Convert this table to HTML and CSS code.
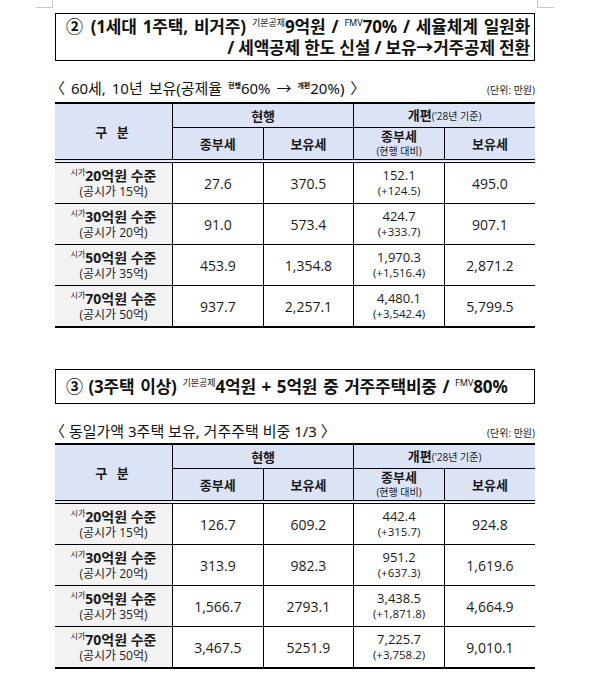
FILE: index.html
```html
<!DOCTYPE html>
<html>
<head>
  <meta charset="utf-8">
  <title>종부세 개편안 비교</title>
  <link rel="stylesheet" href="styles.css">
</head>
<body>
  <span class="crop-mark crop-left"></span>
  <span class="crop-mark crop-right"></span>

  <div class="page">
    <!-- case 2 -->
    <div class="title-box title-first">
      <span class="line-full">② (1세대 1주택, 비거주) <sup class="tag">기본공제</sup>9억원 / <sup class="tag">FMV</sup>70% / 세율체계 일원화</span>
      <span class="line-end">/ 세액공제 한도 신설 / 보유→거주공제 전환</span>
    </div>

    <div class="caption">
      <span class="caption-main spaced">〈 60세, 10년 보유(공제율 <sup class="mini">현행</sup>60% → <sup class="mini">개편</sup>20%) 〉</span>
      <span class="unit">(단위: 만원)</span>
    </div>

    <table class="tax-table">
      <thead>
        <tr class="head-top">
          <th rowspan="2" class="col-label">구 분</th>
          <th colspan="2">현행</th>
          <th colspan="2">개편<small>('28년 기준)</small></th>
        </tr>
        <tr class="head-sub">
          <th>종부세</th>
          <th>보유세</th>
          <th>종부세<span class="sub-note">(현행 대비)</span></th>
          <th>보유세</th>
        </tr>
      </thead>
      <tbody>
        <tr>
          <td class="row-label"><b><sup>시가</sup>20억원 수준</b><span>(공시가 15억)</span></td>
          <td>27.6</td><td>370.5</td>
          <td class="diff">152.1<span>(+124.5)</span></td>
          <td>495.0</td>
        </tr>
        <tr>
          <td class="row-label"><b><sup>시가</sup>30억원 수준</b><span>(공시가 20억)</span></td>
          <td>91.0</td><td>573.4</td>
          <td class="diff">424.7<span>(+333.7)</span></td>
          <td>907.1</td>
        </tr>
        <tr>
          <td class="row-label"><b><sup>시가</sup>50억원 수준</b><span>(공시가 35억)</span></td>
          <td>453.9</td><td>1,354.8</td>
          <td class="diff">1,970.3<span>(+1,516.4)</span></td>
          <td>2,871.2</td>
        </tr>
        <tr>
          <td class="row-label"><b><sup>시가</sup>70억원 수준</b><span>(공시가 50억)</span></td>
          <td>937.7</td><td>2,257.1</td>
          <td class="diff">4,480.1<span>(+3,542.4)</span></td>
          <td>5,799.5</td>
        </tr>
      </tbody>
    </table>

    <!-- case 3 -->
    <div class="title-box title-second">
      ③ (3주택 이상) <sup class="tag">기본공제</sup>4억원 + 5억원 중 거주주택비중 / <sup class="tag">FMV</sup>80%
    </div>

    <div class="caption caption-tight">
      <span class="caption-main">〈 동일가액 3주택 보유, 거주주택 비중 1/3 〉</span>
      <span class="unit">(단위: 만원)</span>
    </div>

    <table class="tax-table">
      <thead>
        <tr class="head-top">
          <th rowspan="2" class="col-label">구 분</th>
          <th colspan="2">현행</th>
          <th colspan="2">개편<small>('28년 기준)</small></th>
        </tr>
        <tr class="head-sub">
          <th>종부세</th>
          <th>보유세</th>
          <th>종부세<span class="sub-note">(현행 대비)</span></th>
          <th>보유세</th>
        </tr>
      </thead>
      <tbody>
        <tr>
          <td class="row-label"><b><sup>시가</sup>20억원 수준</b><span>(공시가 15억)</span></td>
          <td>126.7</td><td>609.2</td>
          <td class="diff">442.4<span>(+315.7)</span></td>
          <td>924.8</td>
        </tr>
        <tr>
          <td class="row-label"><b><sup>시가</sup>30억원 수준</b><span>(공시가 20억)</span></td>
          <td>313.9</td><td>982.3</td>
          <td class="diff">951.2<span>(+637.3)</span></td>
          <td>1,619.6</td>
        </tr>
        <tr>
          <td class="row-label"><b><sup>시가</sup>50억원 수준</b><span>(공시가 35억)</span></td>
          <td>1,566.7</td><td>2793.1</td>
          <td class="diff">3,438.5<span>(+1,871.8)</span></td>
          <td>4,664.9</td>
        </tr>
        <tr>
          <td class="row-label"><b><sup>시가</sup>70억원 수준</b><span>(공시가 50억)</span></td>
          <td>3,467.5</td><td>5251.9</td>
          <td class="diff">7,225.7<span>(+3,758.2)</span></td>
          <td>9,010.1</td>
        </tr>
      </tbody>
    </table>
  </div>
</body>
</html>
```

FILE: styles.css
```css
body {
  margin: 0;
  position: relative;
  background: #ffffff;
  color: #111111;
  font-family: "Open Sans", "Noto Sans CJK KR", sans-serif;
}

/* page corner marks */
.crop-mark {
  position: absolute;
  top: 0;
  width: 16px;
  height: 7px;
  border-bottom: 1px solid #c8c8c8;
}
.crop-left {
  left: 36px;
  border-right: 1px solid #c8c8c8;
}
.crop-right {
  left: 537px;
  border-left: 1px solid #c8c8c8;
}

.page {
  width: 480px;
  margin-left: 55px;
  padding-top: 13px;
}

.title-box {
  border: 1px solid #000000;
  font-family: "Noto Sans", "Noto Sans CJK KR", sans-serif;
  font-weight: bold;
  font-size: 17px;
  line-height: 21px;
  letter-spacing: -0.2px;
}
.title-first {
  padding: 2px 4px 2px 10px;
}
.title-first .line-full {
  display: block;
  text-align: justify;
  text-align-last: justify;
}
.title-first .line-end {
  display: block;
  text-align: right;
}
.title-second {
  margin-top: 41px;
  padding: 6px 4px 6px 10px;
  white-space: nowrap;
  word-spacing: 1.5px;
}
.title-box .tag {
  font-size: 9px;
  font-weight: normal;
  vertical-align: 7px;
  line-height: 0;
  letter-spacing: 0;
  word-spacing: 0;
}

.caption {
  display: flex;
  justify-content: space-between;
  align-items: flex-end;
  margin-top: 17px;
  margin-bottom: 4px;
}
.caption-tight {
  margin-bottom: 2px;
}
.caption-main {
  font-family: "Noto Sans", "Noto Sans CJK KR", sans-serif;
  font-size: 15px;
  line-height: 20px;
  margin-left: -5px;
}
.caption-main.spaced {
  word-spacing: 2px;
}
.caption-main .mini {
  font-size: 7px;
  font-weight: bold;
  vertical-align: 6px;
  line-height: 0;
  word-spacing: 0;
}
.unit {
  font-size: 10px;
  line-height: 14px;
  color: #222222;
  padding-bottom: 1px;
}

.tax-table {
  width: 480px;
  border-collapse: collapse;
  table-layout: fixed;
  border-top: 2px solid #000000;
  border-bottom: 2px solid #000000;
}
.tax-table th,
.tax-table td {
  border: 1px solid #000000;
  text-align: center;
  padding: 0;
}
.tax-table tr > :first-child {
  border-left: none;
}
.tax-table tr > :last-child {
  border-right: none;
}
.tax-table th {
  background: #dce3f4;
  font-weight: bold;
  font-size: 13px;
  line-height: 16px;
  color: #1a1a1a;
}
.tax-table .col-label {
  width: 117px;
  letter-spacing: 3px;
  border-bottom: 4px double #000000;
}
.head-top th {
  height: 23px;
}
.head-top small {
  font-size: 10px;
  font-weight: normal;
}
.head-sub th {
  height: 31px;
  border-bottom: 4px double #000000;
}
.head-sub .sub-note {
  display: block;
  font-size: 10px;
  font-weight: normal;
  line-height: 15px;
}

.tax-table td {
  height: 40px;
  font-size: 14px;
  color: #1a1a1a;
}
.tax-table td.row-label {
  background: #f2f2f2;
}
.row-label b {
  display: block;
  font-family: "Noto Sans", "Noto Sans CJK KR", sans-serif;
  font-size: 14px;
  line-height: 16px;
}
.row-label sup {
  font-size: 8px;
  font-weight: normal;
  vertical-align: 6px;
  line-height: 0;
}
.row-label span {
  display: block;
  font-size: 12px;
  line-height: 15px;
  color: #222222;
}
.tax-table td.diff {
  font-size: 13px;
  line-height: 15px;
}
.diff span {
  display: block;
  font-size: 11.5px;
}
```
